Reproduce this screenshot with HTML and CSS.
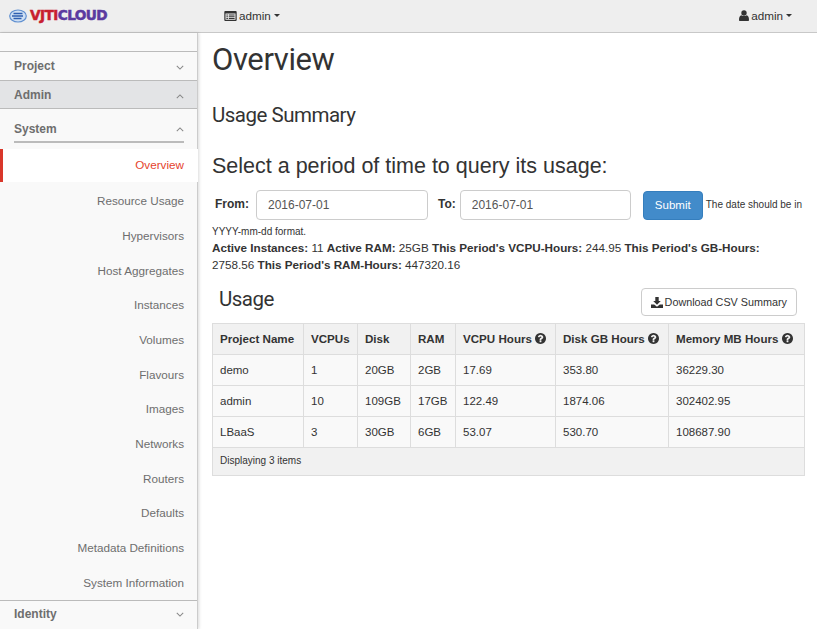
FILE: index.html
```html
<!DOCTYPE html>
<html lang="en">
<head>
  <meta charset="UTF-8"/>
  <title>Usage Overview</title>
  <link rel="stylesheet" href="styles.css">
</head>
<body>
  <svg class="defs" width="0" height="0">
    <symbol id="i-help" viewBox="0 0 1536 1792"><path d="M896 1376v-192q0-14-9-23t-23-9h-192q-14 0-23 9t-9 23v192q0 14 9 23t23 9h192q14 0 23-9t9-23zm256-672q0-88-55.5-163t-138.5-116-170-41q-243 0-371 213-15 24 8 42l132 100q7 6 19 6 16 0 25-12 53-68 86-92 34-24 86-24 48 0 85.5 26t37.5 59q0 38-20 61t-68 45q-63 28-115.5 86.5t-52.5 125.5v36q0 14 9 23t23 9h192q14 0 23-9t9-23q0-19 21.5-49.5t54.5-49.5q32-18 49-28.5t46-35 44.5-48 28-60.5 12.5-81zm384 192q0 209-103 385.5t-279.5 279.5-385.5 103-385.5-103-279.5-279.5-103-385.5 103-385.5 279.5-279.5 385.5-103 385.5 103 279.5 279.5 103 385.5z"/></symbol>
    <symbol id="i-down" viewBox="0 0 10 6"><path d="M1 1l4 4 4-4" fill="none" stroke="currentColor" stroke-width="1.300"/></symbol>
    <symbol id="i-up" viewBox="0 0 10 6"><path d="M1 5l4-4 4 4" fill="none" stroke="currentColor" stroke-width="1.300"/></symbol>
  </svg>

  <nav class="topbar">
    <a class="brand">
      <svg class="brand-icon" width="18" height="14" viewBox="0 0 18 14">
        <ellipse cx="9" cy="7" rx="8.300" ry="6" fill="#cfe0f4" stroke="#5f8fd0" stroke-width="1.200"/>
        <path d="M4.500 4.500h9M3 7h11M4.500 9.500h8" stroke="#2f5fb0" stroke-width="1.600"/>
      </svg>
      <span class="brand-text"><span class="brand-red">VJTI</span><span class="brand-purple">CLOUD</span></span>
    </a>
    <a class="top-link project-menu">
      <svg width="13" height="12" viewBox="0 0 13 12"><path fill-rule="evenodd" d="M1.200 1h10.600c.5 0 .9.4.9.9v8.200c0 .5-.4.9-.9.9H1.200c-.5 0-.9-.4-.9-.9V1.900c0-.5.4-.9.9-.9zM1.500 3.500v6.300h10V3.500zM2.400 4.500h1.500v1h-1.500zM4.800 4.500h5.800v1H4.800zM2.400 6.200h1.500v1h-1.500zM4.800 6.200h5.800v1H4.800zM2.400 7.900h1.500v1h-1.500zM4.800 7.900h5.800v1H4.800z"/></svg>
      admin <span class="caret"></span>
    </a>
    <a class="top-link user-menu">
      <svg width="10" height="11" viewBox="0 0 10 11"><circle cx="5" cy="3" r="2.700"/><path d="M0 10c0-3 .8-4.500 2.400-4.800.7.600 1.600.9 2.600.9s1.900-.3 2.600-.9C9.200 5.500 10 7 10 10c0 .6-.4 1-1 1H1c-.6 0-1-.4-1-1z"/></svg>
      admin <span class="caret"></span>
    </a>
  </nav>

  <div class="layout">
    <aside class="sidebar">
      <div class="side-head first">Project <svg class="chev"><use href="#i-down"/></svg></div>
      <div class="side-head active">Admin <svg class="chev"><use href="#i-up"/></svg></div>
      <div class="side-sub"><span class="side-sub-label">System <svg class="chev"><use href="#i-up"/></svg></span></div>
      <ul class="side-list">
        <li class="current">Overview</li>
        <li>Resource Usage</li>
        <li>Hypervisors</li>
        <li>Host Aggregates</li>
        <li>Instances</li>
        <li>Volumes</li>
        <li>Flavours</li>
        <li>Images</li>
        <li>Networks</li>
        <li>Routers</li>
        <li>Defaults</li>
        <li>Metadata Definitions</li>
        <li>System Information</li>
      </ul>
      <div class="side-head identity">Identity <svg class="chev"><use href="#i-down"/></svg></div>
    </aside>

    <main class="content">
      <h1>Overview</h1>
      <h2>Usage Summary</h2>
      <h3>Select a period of time to query its usage:</h3>

      <form class="period-form">
        <label>From:</label>
        <input class="date-input" type="text" value="2016-07-01">
        <label class="to-label">To:</label>
        <input class="date-input" type="text" value="2016-07-01">
        <button class="btn-submit" type="button">Submit</button>
        <small>The date should be in</small>
      </form>
      <small class="format-note">YYYY-mm-dd format.</small>

      <p class="totals">
        <strong>Active Instances:</strong> 11
        <strong>Active RAM:</strong> 25GB
        <strong>This Period's VCPU-Hours:</strong> 244.95
        <strong>This Period's GB-Hours:</strong> 2758.56
        <strong>This Period's RAM-Hours:</strong> 447320.16
      </p>

      <div class="table-head">
        <h2 class="table-title">Usage</h2>
        <a class="btn-csv">
          <svg width="12" height="11" viewBox="0 0 12 11"><path d="M4.300 0h3.400v4h2.100L6 7.800 2.200 4h2.100z"/><path d="M0 7.500h3.200L6 9.800l2.800-2.300H12V11H0z"/></svg>
          Download CSV Summary
        </a>
      </div>

      <table class="usage">
        <thead>
          <tr>
            <th class="c1">Project Name</th>
            <th class="c2">VCPUs</th>
            <th class="c3">Disk</th>
            <th class="c4">RAM</th>
            <th class="c5">VCPU Hours <svg class="help"><use href="#i-help"/></svg></th>
            <th class="c6">Disk GB Hours <svg class="help"><use href="#i-help"/></svg></th>
            <th>Memory MB Hours <svg class="help"><use href="#i-help"/></svg></th>
          </tr>
        </thead>
        <tbody>
          <tr><td>demo</td><td>1</td><td>20GB</td><td>2GB</td><td>17.69</td><td>353.80</td><td>36229.30</td></tr>
          <tr><td>admin</td><td>10</td><td>109GB</td><td>17GB</td><td>122.49</td><td>1874.06</td><td>302402.95</td></tr>
          <tr><td>LBaaS</td><td>3</td><td>30GB</td><td>6GB</td><td>53.07</td><td>530.70</td><td>108687.90</td></tr>
        </tbody>
        <tfoot>
          <tr><td colspan="7">Displaying 3 items</td></tr>
        </tfoot>
      </table>
    </main>
  </div>
</body>
</html>
```

FILE: styles.css
```css
* { box-sizing: border-box; }
html, body { height: 100%; }
body {
  margin: 0;
  font-family: "Liberation Sans", Arial, sans-serif;
  font-size: 13px;
  line-height: 1.43;
  color: #333;
  background: #fff;
  overflow: hidden;
}
.defs { position: absolute; }

/* top bar */
.topbar {
  display: flex;
  align-items: center;
  height: 33px;
  background: #eee;
  border-bottom: 1px solid #c8c8c8;
  font-size: 11.700px;
  color: #333;
}
.brand { display: flex; align-items: center; width: 224px; padding-left: 9px; }
.brand-icon { margin-right: 3px; }
.brand-text {
  font-family: "DejaVu Sans", sans-serif;
  font-weight: bold;
  font-size: 13.700px;
  letter-spacing: -0.6px;
  -webkit-text-stroke: 0.5px currentColor;
}
.brand-red { color: #c8202f; }
.brand-purple { color: #5a3aa0; }
.top-link { display: flex; align-items: center; gap: 2px; }
.top-link svg { fill: #333; }
.user-menu { margin-left: auto; margin-right: 25px; }
.caret {
  display: inline-block;
  margin-left: 1px;
  border-top: 3.500px solid #333;
  border-left: 3.500px solid transparent;
  border-right: 3.500px solid transparent;
}

.layout { display: flex; height: 596px; }

/* side nav */
.sidebar {
  flex: none;
  width: 198px;
  padding-top: 18px;
  background: #f9f9f9;
  border-right: 1px solid #ccc;
  box-shadow: 1px 0 3px rgba(0,0,0,0.15);
  font-size: 12px;
  color: #6e6e6e;
}
.side-head {
  display: flex;
  justify-content: space-between;
  align-items: center;
  height: 29px;
  padding: 2px 13px 0 14px;
  border-top: 1px solid #bbb;
  font-weight: bold;
}
.side-head.active { background: #e3e4e6; height: 28px; padding-top: 3px; }
.side-head.identity { height: 30px; padding: 0 13px 2px 14px; border-bottom: 1px solid #bbb; }
.side-sub { padding: 0 13px 0 14px; border-top: 1px solid #bbb; }
.side-sub-label {
  display: flex;
  justify-content: space-between;
  align-items: center;
  height: 34px;
  padding-top: 9px;
  font-weight: bold;
  border-bottom: 2px solid #bbb;
}
.chev { width: 8px; height: 5px; color: #888; }
.side-list { list-style: none; margin: 6px 0 0; padding: 0; }
.side-list li {
  height: 34.700px;
  line-height: 34.700px;
  padding-right: 13px;
  text-align: right;
  font-size: 11.700px;
}
.side-list li.current {
  height: 33px;
  line-height: 32px;
  margin-bottom: 2.200px;
  margin-right: -1px;
  padding-right: 14px;
  position: relative;
  background: #fff;
  color: #e5432d;
  border-left: 3px solid #d9372a;
}

/* main column */
.content { flex: 1; min-width: 0; padding: 0 12px 0 14px; }
h1, h2 { font-family: Roboto, sans-serif; font-weight: 400; color: #333; }
h1 { margin: 5px 0 0; font-size: 31px; line-height: 44px; letter-spacing: -0.4px; }
h2 { margin: 19px 0 0; font-size: 20.500px; line-height: 28px; letter-spacing: -0.5px; }
h3 { margin: 23px 0 0; font-size: 21.500px; font-weight: 400; line-height: 28px; }

.period-form { display: flex; align-items: center; margin-top: 10px; }
.period-form label { margin: 0 7px 0 3px; font-size: 12px; font-weight: bold; }
.period-form .to-label { margin: 0 4px 0 10px; }
.period-form small { margin-left: 3px; font-size: 10px; white-space: nowrap; }
.date-input {
  width: 172px;
  height: 30px;
  padding: 0 11px;
  border: 1px solid #ccc;
  border-radius: 4px;
  font: 12px "Liberation Sans", sans-serif;
  color: #555;
}
.date-input + .to-label + .date-input { width: 171px; }
.btn-submit {
  flex: none;
  height: 29px;
  width: 60px;
  margin-left: 12px;
  border: 1px solid #357ebd;
  border-radius: 4px;
  background: #428bca;
  color: #fff;
  font: 11.500px "Liberation Sans", sans-serif;
}
.format-note { display: block; margin-top: 5px; font-size: 10px; line-height: 14px; }

.totals { margin: 0; font-size: 11.700px; line-height: 17px; }

.table-head {
  display: flex;
  justify-content: space-between;
  align-items: center;
  margin-top: 15px;
  padding: 0 8px 0 7px;
}
.table-title { margin: 0 0 6px; line-height: 20px; }
.btn-csv {
  display: flex;
  align-items: center;
  gap: 2px;
  height: 28px;
  padding: 1px 9px 0;
  border: 1px solid #ccc;
  border-radius: 4px;
  background: #fff;
  font-size: 10.800px;
}
.btn-csv svg { fill: #333; }

.usage {
  width: 100%;
  margin-top: 7px;
  border-collapse: collapse;
  table-layout: fixed;
  font-size: 11.500px;
}
.usage th, .usage td {
  height: 31px;
  padding: 0 7px;
  border: 1px solid #ddd;
  text-align: left;
}
.usage thead th { background: #f1f1f1; font-size: 11.600px; }
.usage tbody td { background: #f9f9f9; }
.usage tfoot td { height: 28px; background: #f1f1f1; font-size: 10px; }
.c1 { width: 91px; }
.c2 { width: 54px; }
.c3 { width: 53px; }
.c4 { width: 45px; }
.c5 { width: 100px; }
.c6 { width: 113px; }
.help { width: 11px; height: 13px; vertical-align: -2.500px; fill: #333; }
```
